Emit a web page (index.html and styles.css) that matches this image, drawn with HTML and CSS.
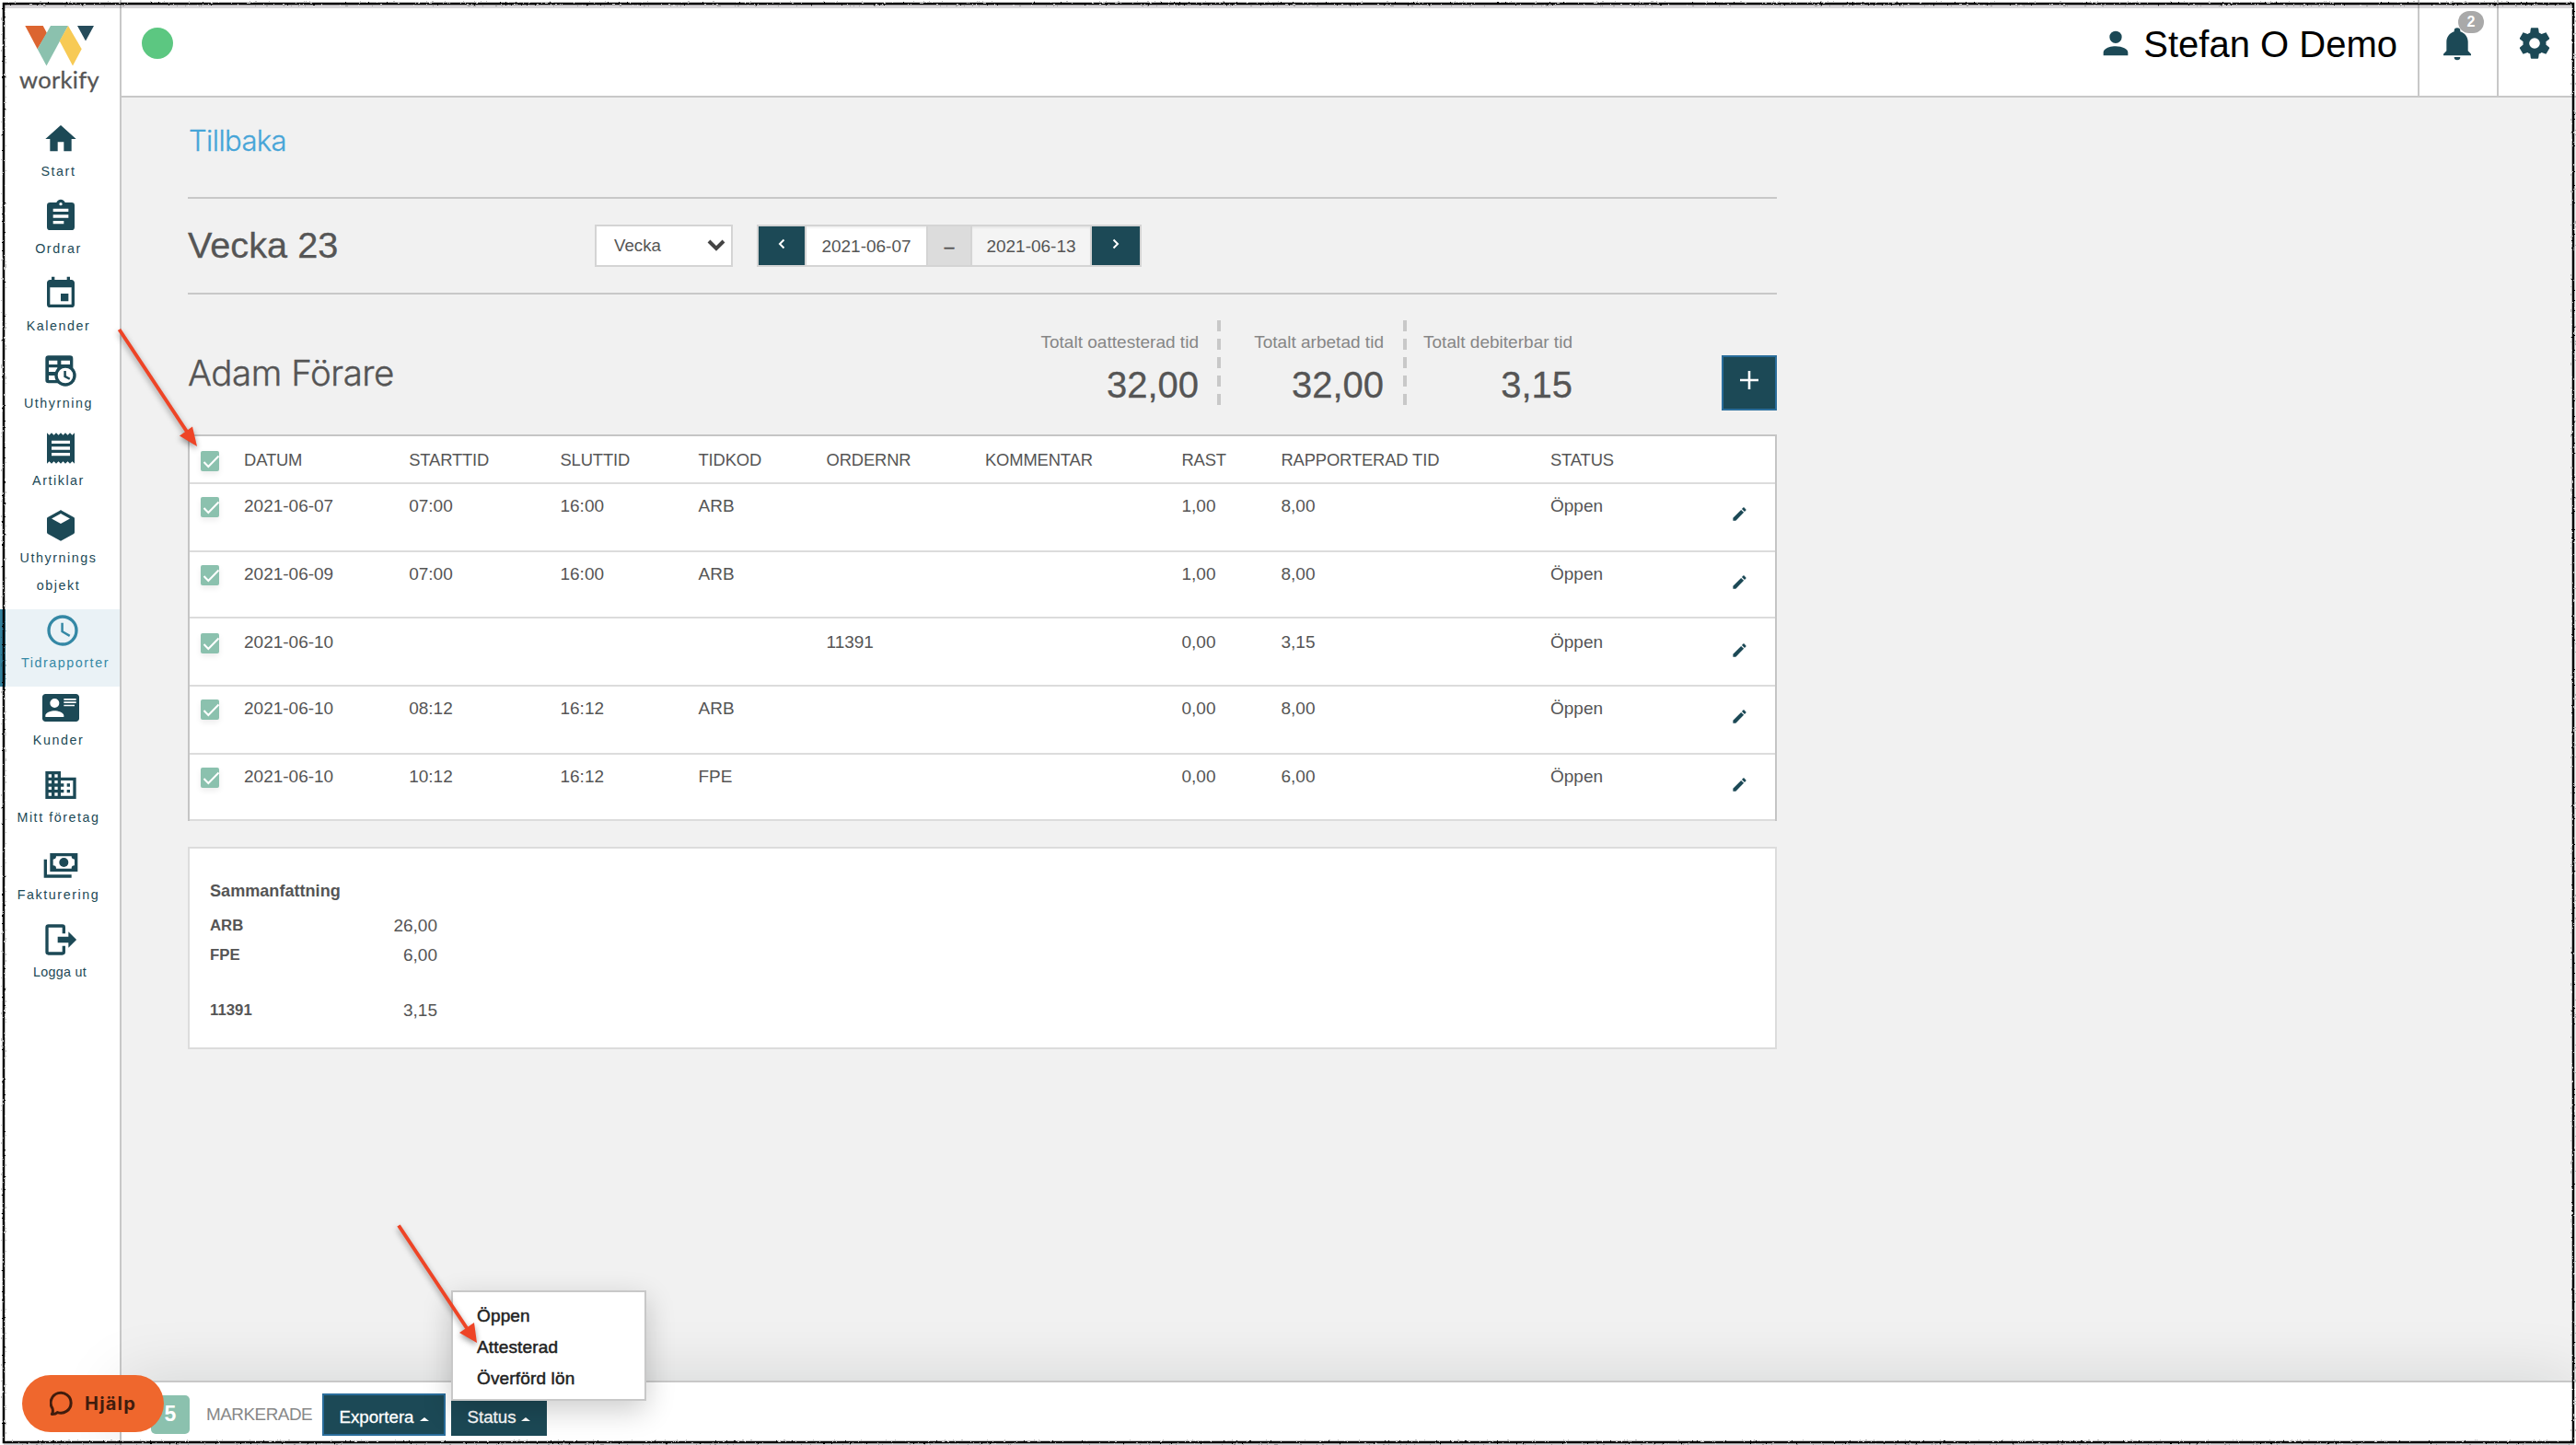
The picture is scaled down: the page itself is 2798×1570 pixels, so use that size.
FILE: index.html
```html
<!DOCTYPE html>
<html lang="sv">
<head>
    <meta charset="UTF-8">
    <meta name="viewport" content="width=device-width, initial-scale=1.0">
    <title>Workify - Tidrapporter</title>
    <link rel="stylesheet" href="styles.css">
</head>
<body>
    <svg class="defs">
        <symbol id="pencil" viewBox="0 0 24 24"><path d="M20.71,7.04C21.1,6.65 21.1,6 20.71,5.63L18.37,3.29C18,2.9 17.35,2.9 16.96,3.29L15.12,5.12L18.87,8.87M3,17.25V21H6.75L17.81,9.93L14.06,6.18L3,17.25Z"/></symbol>
        <symbol id="check" viewBox="0 0 20 22"><path d="M3.5,12L8.3,17L19.5,5.5" fill="none" stroke="#fff" stroke-width="2"/></symbol>
    </svg>

    <nav class="sidebar">
        <a class="logo" href="#">
            <svg width="86" height="44" viewBox="0 0 86 44">
                <path fill="#dc6530" d="M5.3,0H24.7L29,8L18.7,25.3Z"/>
                <path fill="#8bc1ae" d="M33,0H52L28.5,43.5L18.7,25.3Z"/>
                <path fill="#f7ca55" d="M52,0L66.7,25.3L57,43.5L42.7,16.5Z"/>
                <path fill="#254b5a" d="M62,0H80L71,16.5Z"/>
            </svg>
            <span>workify</span>
        </a>
        <ul class="menu">
            <li>
                <svg class="icon" viewBox="0 0 24 24"><path d="M10,20V14H14V20H19V12H22L12,3L2,12H5V20H10Z"/></svg>
                <span>Start</span>
            </li>
            <li>
                <svg class="icon" viewBox="0 0 24 24"><path d="M17,9H7V7H17M17,13H7V11H17M14,17H7V15H14M12,3A1,1 0 0,1 13,4A1,1 0 0,1 12,5A1,1 0 0,1 11,4A1,1 0 0,1 12,3M19,3H14.82C14.4,1.84 13.3,1 12,1C10.7,1 9.6,1.84 9.18,3H5A2,2 0 0,0 3,5V19A2,2 0 0,0 5,21H19A2,2 0 0,0 21,19V5A2,2 0 0,0 19,3Z"/></svg>
                <span>Ordrar</span>
            </li>
            <li>
                <svg class="icon" viewBox="0 0 24 24"><path d="M19,19H5V8H19M16,1V3H8V1H6V3H5C3.89,3 3,3.89 3,5V19A2,2 0 0,0 5,21H19A2,2 0 0,0 21,19V5C21,3.89 20.1,3 19,3H18V1M17,12H12V17H17V12Z"/></svg>
                <span>Kalender</span>
            </li>
            <li>
                <svg class="icon" viewBox="0 0 24 24">
                    <path fill-rule="evenodd" d="M4,2H18A2,2 0 0,1 20,4V20H4A2,2 0 0,1 2,18V4A2,2 0 0,1 4,2M4.2,5.2V7.8H9.8V5.2ZM12.2,5.2V7.8H18V5.2ZM4.2,9.8V12.6H9.8V9.8ZM4.2,15V18H9.8V15Z"/>
                    <path fill="#fff" d="M17.5,16H22V22H17.5Z"/>
                    <circle cx="15" cy="15" r="7"/>
                    <circle cx="15" cy="15" r="5" fill="#fff"/>
                    <path d="M14,12H15.5V15.1L18.2,16.7L17.5,17.9L14,16Z"/>
                </svg>
                <span>Uthyrning</span>
            </li>
            <li>
                <svg class="icon" viewBox="0 0 24 24"><path fill-rule="evenodd" d="M3,22L4.5,20.5L6,22L7.5,20.5L9,22L10.5,20.5L12,22L13.5,20.5L15,22L16.5,20.5L18,22L19.5,20.5L21,22V2L19.5,3.5L18,2L16.5,3.5L15,2L13.5,3.5L12,2L10.5,3.5L9,2L7.5,3.5L6,2L4.5,3.5L3,2ZM18,9H6V7H18ZM18,13H6V11H18ZM18,17H6V15H18Z"/></svg>
                <span>Artiklar</span>
            </li>
            <li>
                <svg class="icon" viewBox="0 0 24 24"><path fill-rule="evenodd" d="M21,16.5C21,16.88 20.79,17.21 20.47,17.38L12.57,21.82C12.41,21.94 12.21,22 12,22C11.79,22 11.59,21.94 11.43,21.82L3.53,17.38C3.21,17.21 3,16.88 3,16.5V7.5C3,7.12 3.21,6.79 3.53,6.62L11.43,2.18C11.59,2.06 11.79,2 12,2C12.21,2 12.41,2.06 12.57,2.18L20.47,6.62C20.79,6.79 21,7.12 21,7.5V16.5M12,4.15L6.04,7.5L12,10.85L17.96,7.5L12,4.15Z"/></svg>
                <span>Uthyrnings<br>objekt</span>
            </li>
            <li class="active">
                <svg class="icon" viewBox="0 0 24 24"><path d="M12,20A8,8 0 0,0 20,12A8,8 0 0,0 12,4A8,8 0 0,0 4,12A8,8 0 0,0 12,20M12,2A10,10 0 0,1 22,12A10,10 0 0,1 12,22C6.47,22 2,17.5 2,12A10,10 0 0,1 12,2M12.5,7V12.25L17,14.92L16.25,16.15L11,13V7H12.5Z"/></svg>
                <span>Tidrapporter</span>
            </li>
            <li>
                <svg class="icon" viewBox="0 0 24 24"><path fill-rule="evenodd" d="M2,3H22C23.05,3 24,3.95 24,5V19C24,20.05 23.05,21 22,21H2C0.95,21 0,20.05 0,19V5C0,3.95 0.95,3 2,3M14,6V7H22V6H14M14,8V9H22V8H14M14,10V11H21V10H14M8,13.91C6,13.91 2,15 2,17V18H14V17C14,15 10,13.91 8,13.91M8,6A3,3 0 0,0 5,9A3,3 0 0,0 8,12A3,3 0 0,0 11,9A3,3 0 0,0 8,6Z"/></svg>
                <span>Kunder</span>
            </li>
            <li>
                <svg class="icon" viewBox="0 0 24 24"><path d="M18,15H16V17H18M18,11H16V13H18M20,19H12V17H14V15H12V13H14V11H12V9H20M10,7H8V5H10M10,11H8V9H10M10,15H8V13H10M10,19H8V17H10M6,7H4V5H6M6,11H4V9H6M6,15H4V13H6M6,19H4V17H6M12,7V3H2V21H22V7H12Z"/></svg>
                <span>Mitt företag</span>
            </li>
            <li>
                <svg class="icon" viewBox="0 0 24 24"><path fill-rule="evenodd" d="M5,6H23V18H5V6M9,8A2,2 0 0,1 7,10V14A2,2 0 0,1 9,16H19A2,2 0 0,1 21,14V10A2,2 0 0,1 19,8H9M1,10H3V20H19V22H1V10Z"/><circle cx="14" cy="12" r="3"/></svg>
                <span>Fakturering</span>
            </li>
            <li class="logout">
                <svg class="icon" viewBox="0 0 24 24"><path d="M17,17.25V14H10V10H17V6.75L22.25,12L17,17.25M13,2A2,2 0 0,1 15,4V8H13V4H4V20H13V16H15V20A2,2 0 0,1 13,22H4A2,2 0 0,1 2,20V4A2,2 0 0,1 4,2H13Z"/></svg>
                <span>Logga ut</span>
            </li>
        </ul>
    </nav>

    <div class="page">
        <header class="top">
            <i class="online"></i>
            <div class="user">
                <svg class="icon" viewBox="0 0 24 24"><path d="M12,4A4,4 0 0,1 16,8A4,4 0 0,1 12,12A4,4 0 0,1 8,8A4,4 0 0,1 12,4M12,14C16.42,14 20,15.79 20,18V20H4V18C4,15.79 7.58,14 12,14Z"/></svg>
                <span>Stefan O Demo</span>
            </div>
            <div class="top-cell">
                <svg class="icon" viewBox="0 0 24 24"><path d="M21,19V20H3V19L5,17V11C5,7.9 7.03,5.17 10,4.29C10,4.19 10,4.1 10,4A2,2 0 0,1 12,2A2,2 0 0,1 14,4C14,4.1 14,4.19 14,4.29C16.97,5.17 19,7.9 19,11V17L21,19M14,21A2,2 0 0,1 12,23A2,2 0 0,1 10,21"/></svg>
                <b class="count">2</b>
            </div>
            <div class="top-cell last">
                <svg class="icon" viewBox="0 0 24 24"><path d="M12,15.5A3.5,3.5 0 0,1 8.5,12A3.5,3.5 0 0,1 12,8.5A3.5,3.5 0 0,1 15.5,12A3.5,3.5 0 0,1 12,15.5M19.43,12.97C19.47,12.65 19.5,12.33 19.5,12C19.5,11.67 19.47,11.34 19.43,11L21.54,9.37C21.73,9.22 21.78,8.95 21.66,8.73L19.66,5.27C19.54,5.05 19.27,4.96 19.05,5.05L16.56,6.05C16.04,5.66 15.5,5.32 14.87,5.07L14.5,2.42C14.46,2.18 14.25,2 14,2H10C9.75,2 9.54,2.18 9.5,2.42L9.13,5.07C8.5,5.32 7.96,5.66 7.44,6.05L4.95,5.05C4.73,4.96 4.46,5.05 4.34,5.27L2.34,8.73C2.21,8.95 2.27,9.22 2.46,9.37L4.57,11C4.53,11.34 4.5,11.67 4.5,12C4.5,12.33 4.53,12.65 4.57,12.97L2.46,14.63C2.27,14.78 2.21,15.05 2.34,15.27L4.34,18.73C4.46,18.95 4.73,19.03 4.95,18.95L7.44,17.94C7.96,18.34 8.5,18.68 9.13,18.93L9.5,21.58C9.54,21.82 9.75,22 10,22H14C14.25,22 14.46,21.82 14.5,21.58L14.87,18.93C15.5,18.67 16.04,18.34 16.56,17.94L19.05,18.95C19.27,19.03 19.54,18.95 19.66,18.73L21.66,15.27C21.78,15.05 21.73,14.78 21.54,14.63L19.43,12.97Z"/></svg>
            </div>
        </header>

        <main class="content">
            <a class="back" href="#">Tillbaka</a>

            <section class="week">
                <h1>Vecka 23</h1>
                <div class="select">
                    <span>Vecka</span>
                    <svg width="20" height="14" viewBox="0 0 20 14"><path d="M2,2L10,10L18,2" fill="none" stroke="#444" stroke-width="4"/></svg>
                </div>
                <div class="dates">
                    <button class="prev"><svg width="8" height="12" viewBox="0 0 8 12"><path d="M6.5,1.5L2,6L6.5,10.5"/></svg></button>
                    <span class="date from">2021-06-07</span>
                    <span class="sep">–</span>
                    <span class="date to">2021-06-13</span>
                    <button class="next"><svg width="8" height="12" viewBox="0 0 8 12"><path d="M1.5,1.5L6,6L1.5,10.5"/></svg></button>
                </div>
            </section>

            <section class="person">
                <h2>Adam Förare</h2>
                <div class="total t1"><span>Totalt oattesterad tid</span><strong>32,00</strong></div>
                <div class="total t2"><span>Totalt arbetad tid</span><strong>32,00</strong></div>
                <div class="total t3"><span>Totalt debiterbar tid</span><strong>3,15</strong></div>
                <button class="add"><svg width="22" height="22" viewBox="0 0 22 22"><path d="M11,1V21M1,11H21" stroke="#fff" stroke-width="2.6"/></svg></button>
            </section>

            <div class="table">
                <div class="row head">
                    <i class="box"><svg><use href="#check"/></svg></i>
                    <span>DATUM</span><span>STARTTID</span><span>SLUTTID</span><span>TIDKOD</span><span>ORDERNR</span><span>KOMMENTAR</span><span>RAST</span><span>RAPPORTERAD TID</span><span>STATUS</span>
                </div>
                <div class="row">
                    <i class="box"><svg><use href="#check"/></svg></i>
                    <span>2021-06-07</span><span>07:00</span><span>16:00</span><span>ARB</span><span></span><span></span><span>1,00</span><span>8,00</span><span>Öppen</span>
                    <svg class="edit"><use href="#pencil"/></svg>
                </div>
                <div class="row low">
                    <i class="box"><svg><use href="#check"/></svg></i>
                    <span>2021-06-09</span><span>07:00</span><span>16:00</span><span>ARB</span><span></span><span></span><span>1,00</span><span>8,00</span><span>Öppen</span>
                    <svg class="edit"><use href="#pencil"/></svg>
                </div>
                <div class="row order-row">
                    <i class="box"><svg><use href="#check"/></svg></i>
                    <span>2021-06-10</span><span></span><span></span><span></span><span>11391</span><span></span><span>0,00</span><span>3,15</span><span>Öppen</span>
                    <svg class="edit"><use href="#pencil"/></svg>
                </div>
                <div class="row">
                    <i class="box"><svg><use href="#check"/></svg></i>
                    <span>2021-06-10</span><span>08:12</span><span>16:12</span><span>ARB</span><span></span><span></span><span>0,00</span><span>8,00</span><span>Öppen</span>
                    <svg class="edit"><use href="#pencil"/></svg>
                </div>
                <div class="row low">
                    <i class="box"><svg><use href="#check"/></svg></i>
                    <span>2021-06-10</span><span>10:12</span><span>16:12</span><span>FPE</span><span></span><span></span><span>0,00</span><span>6,00</span><span>Öppen</span>
                    <svg class="edit"><use href="#pencil"/></svg>
                </div>
            </div>

            <div class="summary">
                <h3>Sammanfattning</h3>
                <p><b>ARB</b><span>26,00</span></p>
                <p><b>FPE</b><span>6,00</span></p>
                <p class="order"><b>11391</b><span>3,15</span></p>
            </div>
        </main>

        <footer class="actions">
            <b class="selected">5</b>
            <span class="marked">MARKERADE</span>
            <button class="export">Exportera <i class="caret"></i></button>
            <div class="status">
                <button>Status <i class="caret"></i></button>
                <ul class="dropdown">
                    <li>Öppen</li>
                    <li>Attesterad</li>
                    <li>Överförd lön</li>
                </ul>
            </div>
        </footer>
    </div>

    <div class="help">
        <svg width="26" height="28" viewBox="0 0 26 28"><path d="M2.3,25.5C3.6,23.6 3.8,22 3,19.4A11,11 0 1 1 8.4,23.6C6.6,25.3 4.6,25.6 2.3,25.5Z" fill="none" stroke="#401c0d" stroke-width="3" stroke-linejoin="round"/></svg>
        <span>Hjälp</span>
    </div>

    <!-- arrows and sketched frame -->
    <svg class="overlay" viewBox="0 0 2798 1570">
        <filter id="rough" x="0" y="0" width="2798" height="1570" filterUnits="userSpaceOnUse">
            <feTurbulence type="fractalNoise" baseFrequency="0.35" numOctaves="2" seed="4"/>
            <feDisplacementMap in="SourceGraphic" scale="2.5" xChannelSelector="R" yChannelSelector="G"/>
        </filter>
        <g class="arrow">
            <path class="shaft" d="M129.5,358L203,469"/>
            <path class="tip" d="M214,485L195,473.5L209,463.5Z"/>
            <path class="shaft" d="M433,1331.500L507,1443"/>
            <path class="tip" d="M518,1459L499,1448L515,1437Z"/>
        </g>
        <path class="frame-shade" d="M4,7H2794M4,1568.500H2796"/>
        <rect class="frame" x="4" y="4" width="2791" height="1563" filter="url(#rough)"/>
    </svg>
</body>
</html>
```
FILE: styles.css
```css
*{
    margin: 0;
    padding: 0;
    box-sizing: border-box;
}
body{
    display: flex;
    position: relative;
    width: 2798px;
    height: 1570px;
    overflow: hidden;
    background-color: #f1f1f1;
    font-family: "Liberation Sans", Arial, sans-serif;
    font-size: 18.7px;
    color: #555;
}
ul{
    list-style: none;
}
a{
    text-decoration: none;
}
button{
    border: 0;
    font: inherit;
    color: #fff;
    background-color: #1c4956;
}
.defs{
    position: absolute;
    width: 0;
    height: 0;
}
.icon{
    display: block;
    width: 40px;
    height: 40px;
    fill: #1c4956;
}

/* sidebar */
.sidebar{
    width: 132px;
    flex: none;
    background-color: #fff;
    border-right: 2px solid #c8c8c8;
}
.logo{
    display: flex;
    flex-direction: column;
    height: 128px;
    padding: 28px 0 0 22px;
    font-family: Lato, sans-serif;
    font-size: 25.5px;
    line-height: 28px;
    letter-spacing: 0.3px;
    color: #555;
}
.logo span{
    margin: 0 0 0 -1px;
    -webkit-text-stroke: 0.3px #555;
}
.menu li{
    padding: 3px 0 10px;
    font-size: 14.3px;
    line-height: 29.8px;
    letter-spacing: 1.55px;
    text-align: center;
    color: #1c4956;
    min-height: 84px;
}
.menu .icon{
    margin: 0 auto 1px 46px;
}
.menu span{
    display: block;
    height: 30px;
    margin-right: 3px;
    white-space: nowrap;
}
.menu li:nth-child(6) span{
    height: 60px;
}
.menu .active{
    padding-left: 6px;
    border-left: 6px solid #33819d;
    background-color: #eaf2f6;
    color: #3488a5;
}
.menu .active .icon{
    margin-left: 36px;
    fill: #3488a5;
}
.menu .active span{
    margin-right: 0;
}
.menu .logout{
    letter-spacing: 0.3px;
}
.menu .logout span{
    margin-right: 0;
}

/* top bar */
.page{
    flex: 1;
    display: flex;
    flex-direction: column;
}
.top{
    display: flex;
    height: 106px;
    background-color: #fff;
    border-bottom: 2px solid #c8c8c8;
}
.online{
    width: 34px;
    height: 34px;
    margin: 30px auto 0 22px;
    border-radius: 50%;
    background-color: #5cc781;
}
.user{
    display: flex;
    margin: 27px 22px 0 0;
    font-size: 40px;
    line-height: 42px;
    color: #000;
}
.user span{
    margin-left: 10px;
}
.top-cell{
    position: relative;
    width: 86px;
    padding: 27px 0 0 21px;
    border-left: 2px solid #c8c8c8;
}
.top-cell.last{
    padding-left: 19px;
}
.count{
    position: absolute;
    left: 42px;
    top: 12px;
    width: 28px;
    height: 24px;
    border-radius: 12px;
    background-color: #a9a9a9;
    font-size: 16px;
    line-height: 23px;
    text-align: center;
    color: #fff;
}

/* content */
.content{
    flex: 1;
    padding: 27px 0 0 72px;
}
.content > *{
    width: 1726px;
}
.back{
    display: block;
    height: 81px;
    padding-left: 1px;
    font-family: Inter, "Liberation Sans", sans-serif;
    font-weight: 300;
    font-size: 31px;
    line-height: 40px;
    letter-spacing: -0.6px;
    color: #46a5d8;
    -webkit-text-stroke: 0.3px #46a5d8;
}
.week{
    display: flex;
    align-items: center;
    height: 106px;
    border-top: 2px solid #c8c8c8;
    border-bottom: 2px solid #c8c8c8;
}
h1{
    width: 442px;
    padding-bottom: 2px;
    font-size: 39.7px;
    font-weight: normal;
    -webkit-text-stroke: 0.3px #555;
}
.select{
    display: flex;
    align-items: center;
    justify-content: space-between;
    width: 150px;
    height: 46px;
    margin-right: 26px;
    padding: 0 6px 0 19px;
    border: 2px solid #d4d4d4;
    background-color: #fff;
}
.dates{
    display: flex;
    gap: 2px;
    width: 418px;
    height: 46px;
    padding: 2px;
    font-size: 19px;
    line-height: 43px;
    text-align: center;
    background-color: #d4d4d4;
}
.dates svg{
    fill: none;
    stroke: #fff;
    stroke-width: 2;
}
.prev{
    width: 50px;
}
.next{
    width: 52px;
}
.prev svg, .next svg{
    margin-bottom: 3px;
}
.date{
    width: 130px;
    background-color: #fff;
    box-shadow: inset 0 2px 2px rgba(0,0,0,0.05);
}
.sep{
    width: 46px;
    background-color: #dcdcdc;
    -webkit-text-stroke: 0.6px #555;
}
.to{
    width: 128px;
    background-color: #f4f4f4;
}
.person{
    display: flex;
    height: 152px;
}
h2{
    flex: 1;
    margin-top: 65px;
    font-family: Inter, "Liberation Sans", sans-serif;
    font-size: 38.5px;
    font-weight: 300;
    line-height: 40px;
    letter-spacing: -0.45px;
    -webkit-text-stroke: 0.4px #555;
}
.total{
    height: 92px;
    margin-top: 28px;
    padding: 10px 24px 0 0;
    text-align: right;
    background: repeating-linear-gradient(#c8c8c8 0 12px, transparent 12px 20px) right top / 4px 92px no-repeat;
}
.total span{
    display: block;
    font-size: 19px;
    line-height: 28px;
    letter-spacing: 0.02px;
    color: #868686;
}
.total strong{
    display: block;
    margin-top: 12px;
    font-size: 40px;
    font-weight: normal;
    line-height: 40px;
    -webkit-text-stroke: 0.3px #555;
}
.t1{
    width: 222px;
}
.t2{
    width: 202px;
    padding-right: 25px;
}
.t3{
    width: 180px;
    padding-right: 0;
    background: none;
}
.add{
    width: 60px;
    height: 60px;
    margin: 66px 0 0 162px;
    border: 2px solid #2a6d9b;
}
.add svg{
    margin-bottom: 2px;
}

/* time table */
.table{
    border: 2px solid #c5c5c5;
    border-bottom: 0;
    background-color: #fff;
}
.row{
    display: grid;
    grid-template-columns: 59px 179.2px 164.3px 150px 139px 172.5px 213.5px 108px 292.5px 186px 1fr;
    height: 74px;
    padding-top: 12px;
    border-bottom: 2px solid #dcdcdc;
    font-size: 19px;
    line-height: 23px;
}
.low{
    height: 72px;
}
.order-row{
    padding-top: 14px;
}
.head{
    height: 52px;
    padding-top: 14px;
    font-size: 18.4px;
    letter-spacing: -0.15px;
}
.box{
    width: 20px;
    height: 22px;
    margin: 2px 0 0 12px;
    border-radius: 2px;
    background-color: #8bc1ae;
    box-shadow: 0 3px 6px rgba(0,0,0,0.08);
}
.box svg{
    display: block;
    width: 20px;
    height: 22px;
}
.edit{
    width: 19px;
    height: 19px;
    margin: 11px 0 0 10px;
    fill: #1c4956;
}
.summary{
    height: 220px;
    margin-top: 28px;
    padding: 33px 22px;
    border: 2px solid #dcdcdc;
    background-color: #fff;
}
h3{
    height: 35px;
    font-size: 18.1px;
    line-height: 26px;
}
.summary p{
    display: flex;
    justify-content: space-between;
    width: 247px;
    font-size: 19px;
    line-height: 32px;
}
.summary b{
    font-size: 16.8px;
}
.summary .order{
    margin-top: 28px;
}

/* bottom bar */
.actions{
    display: flex;
    align-items: center;
    position: relative;
    height: 70px;
    padding: 2px 0 0 32px;
    border-top: 2px solid #c8c8c8;
    background-color: #fff;
    box-shadow: 0 0 70px rgba(0,20,20,0.13);
}
.selected{
    width: 42px;
    height: 42px;
    border-radius: 5px;
    background-color: #8bc1ae;
    font-size: 23px;
    line-height: 41px;
    text-align: center;
    color: #fff;
}
.marked{
    width: 144px;
    padding-left: 18px;
    font-size: 18.9px;
    letter-spacing: -0.5px;
    color: #888;
}
.actions button{
    display: flex;
    align-items: center;
    justify-content: center;
    gap: 6px;
    height: 46px;
    padding-top: 5px;
    -webkit-text-stroke: 0.3px #fff;
}
.actions .export{
    width: 134px;
    margin-right: 6px;
    border: 2px solid #2a6d9b;
}
.status{
    position: relative;
}
.status button{
    width: 104px;
}
.caret{
    border: 5px solid transparent;
    border-top: 0;
    border-bottom: 4px solid #fff;
    margin-top: 5px;
}
.dropdown{
    position: absolute;
    left: 0;
    bottom: 38px;
    width: 212px;
    height: 120px;
    padding: 9px 0 0 26px;
    border: 2px solid #c8c8c8;
    background-color: #fff;
    box-shadow: 0 10px 30px rgba(0,0,0,0.2);
    font-size: 19px;
    line-height: 34px;
    letter-spacing: 0.15px;
    color: #222;
    -webkit-text-stroke: 0.5px #222;
}
.help{
    display: flex;
    align-items: center;
    position: absolute;
    left: 24px;
    top: 1494px;
    width: 154px;
    height: 62px;
    padding-left: 30px;
    border-radius: 31px;
    background-color: #ef672d;
    font-family: Inter, sans-serif;
    font-size: 20px;
    font-weight: 700;
    letter-spacing: 1.2px;
    color: #401c0d;
}
.help span{
    margin-left: 12px;
}

.overlay{
    position: absolute;
    left: 0;
    top: 0;
    width: 2798px;
    height: 1570px;
}
.arrow{
    filter: drop-shadow(0 3px 3px rgba(0,0,0,0.4));
}
.shaft{
    stroke: #ee4426;
    stroke-width: 4;
}
.tip{
    fill: #ee4426;
}
.frame{
    fill: none;
    stroke: #000;
    stroke-width: 2.5;
}
.frame-shade{
    fill: none;
    stroke: rgba(60,50,60,0.2);
    stroke-width: 4;
}
```
